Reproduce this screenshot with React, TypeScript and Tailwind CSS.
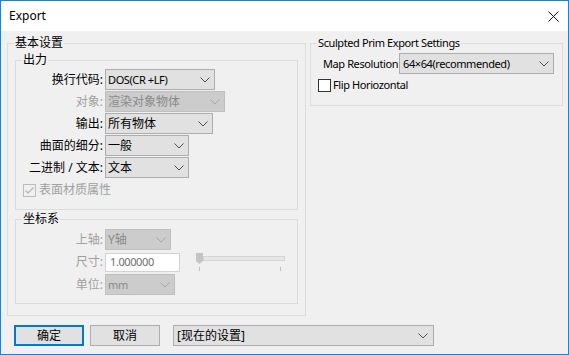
import React from "react";

const latin = "font-['Noto_Sans',sans-serif] text-[11px] tracking-[-0.4px]";

function Chevron({ disabled }: { disabled?: boolean }) {
  return (
    <svg width="10" height="6" viewBox="0 0 10 6" className="shrink-0">
      <polyline
        points="0.5,0.5 5,5 9.5,0.5"
        fill="none"
        stroke={disabled ? "#a8a8a8" : "#505050"}
        strokeWidth="1"
      />
    </svg>
  );
}

function Combo({
  text,
  className,
  disabled,
  isLatin,
}: {
  text: string;
  className: string;
  disabled?: boolean;
  isLatin?: boolean;
}) {
  return (
    <div
      className={`flex h-[21px] items-center justify-between border pl-[2px] pr-[4px] ${
        disabled
          ? "border-[#bfbfbf] bg-[#cccccc] text-[#8a8a8a]"
          : "border-[#adadad] bg-[#e1e1e1] text-black"
      } ${className}`}
    >
      <span className={`whitespace-nowrap ${isLatin ? latin : ""}`}>{text}</span>
      <Chevron disabled={disabled} />
    </div>
  );
}

function Row({
  label,
  disabled,
  children,
}: {
  label: string;
  disabled?: boolean;
  children: React.ReactNode;
}) {
  return (
    <div className="flex items-center">
      <div
        className={`w-[87px] shrink-0 text-right ${
          disabled ? "text-[#a0a0a0]" : "text-black"
        }`}
      >
        {label}
      </div>
      <div className="ml-[2px]">{children}</div>
    </div>
  );
}

function Legend({ text, isLatin }: { text: string; isLatin?: boolean }) {
  return (
    <legend
      className={`-ml-px px-[1px] leading-[14px] text-black ${
        isLatin ? latin : "text-[12px]"
      }`}
    >
      {text}
    </legend>
  );
}

function Slider() {
  return (
    <svg width="90" height="20" viewBox="0 0 90 20" className="ml-[16px]">
      <rect x="7.5" y="4.5" width="81" height="4" fill="#e7e7e7" stroke="#d4d4d4" />
      <path d="M0 1 H7 V9 L3.5 12 L0 9 Z" fill="#c4c4c4" />
      <line x1="3.5" y1="15" x2="3.5" y2="19" stroke="#c0c0c0" />
      <line x1="84.5" y1="15" x2="84.5" y2="19" stroke="#c0c0c0" />
    </svg>
  );
}

export default function App() {
  return (
    <div className="flex h-[355px] w-[569px] flex-col border border-[#1883d7] font-['Noto_Sans','Noto_Sans_CJK_SC',sans-serif] text-[12px] leading-[14px]">
      <div className="flex h-[30px] shrink-0 items-center justify-between bg-white pl-[8px] pr-[9px]">
        <span className="text-[12px] text-black">Export</span>
        <svg width="11" height="11" viewBox="0 0 11 11">
          <path d="M0.5 0.5 L10.5 10.5 M10.5 0.5 L0.5 10.5" stroke="#111" strokeWidth="1" />
        </svg>
      </div>

      <div className="flex flex-1 flex-col bg-[#f0f0f0]">
        <div className="flex gap-[4px] pl-[6px] pt-[5px]">
          <fieldset className="h-[280px] w-[299px] border border-[#dcdcdc] pl-[7px]">
            <Legend text="基本设置" />
            <fieldset className="mt-[3px] h-[157px] w-[283px] border border-[#dcdcdc] pl-[7px]">
              <Legend text="出力" />
              <div className="-ml-[7px] flex flex-col gap-[1px] pt-[2px]">
                <Row label="换行代码:">
                  <Combo text="DOS(CR +LF)" className="w-[110px]" isLatin />
                </Row>
                <Row label="对象:" disabled>
                  <Combo text="渲染对象物体" className="w-[120px]" disabled />
                </Row>
                <Row label="输出:">
                  <Combo text="所有物体" className="w-[108px]" />
                </Row>
                <Row label="曲面的细分:">
                  <Combo text="一般" className="w-[84px]" />
                </Row>
                <Row label="二进制 / 文本:">
                  <Combo text="文本" className="w-[84px]" />
                </Row>
                <div className="ml-[7px] mt-[4px] flex items-center">
                  <div className="flex h-[13px] w-[13px] items-center justify-center border border-[#bcbcbc] bg-[#f0f0f0]">
                    <svg width="11" height="11" viewBox="0 0 11 11">
                      <polyline points="1.5,5.5 4,8 9.5,2.5" fill="none" stroke="#b4b4b4" strokeWidth="1.2" />
                    </svg>
                  </div>
                  <span className="ml-[3px] text-[#a0a0a0]">表面材质属性</span>
                </div>
              </div>
            </fieldset>

            <fieldset className="mt-[2px] h-[92px] w-[283px] border border-[#dcdcdc] pl-[7px]">
              <Legend text="坐标系" />
              <div className="-ml-[7px] flex flex-col gap-[2px] pt-[3px]">
                <Row label="上轴:" disabled>
                  <Combo text="Y轴" className="w-[66px]" disabled />
                </Row>
                <Row label="尺寸:" disabled>
                  <div className="flex items-center">
                    <div className={`flex h-[19px] w-[75px] items-center border border-[#d2d2d2] bg-white pl-[4px] text-[#6d6d6d] ${latin}`}>
                      1.000000
                    </div>
                    <Slider />
                  </div>
                </Row>
                <Row label="单位:" disabled>
                  <Combo text="mm" className="w-[70px]" disabled isLatin />
                </Row>
              </div>
            </fieldset>
          </fieldset>

          <fieldset className="h-[70px] w-[253px] border border-[#dcdcdc] pl-[7px]">
            <Legend text="Sculpted Prim Export Settings" isLatin />
            <div className="-ml-[7px] flex flex-col pl-[7px] pt-[3px]">
              <div className="flex items-center">
                <span className={`ml-[5px] w-[76px] whitespace-nowrap ${latin}`}>Map Resolution</span>
                <Combo text="64×64(recommended)" className="w-[155px] pl-[3px]" isLatin />
              </div>
              <div className="mt-[4px] flex items-center">
                <div className="h-[13px] w-[13px] border border-[#333333] bg-white" />
                <span className={`ml-[2px] ${latin}`}>Flip Horiozontal</span>
              </div>
            </div>
          </fieldset>
        </div>

        <div className="mt-[9px] flex items-center pl-[13px]">
          <button className="flex h-[21px] w-[70px] items-center justify-center border-2 border-[#0078d7] bg-[#e1e1e1] text-black">
            确定
          </button>
          <button className="ml-[6px] flex h-[21px] w-[70px] items-center justify-center border border-[#adadad] bg-[#e1e1e1] text-black">
            取消
          </button>
          <Combo text="[现在的设置]" className="ml-[13px] w-[261px] pl-[3px] pr-[5px]" />
        </div>
      </div>
    </div>
  );
}
